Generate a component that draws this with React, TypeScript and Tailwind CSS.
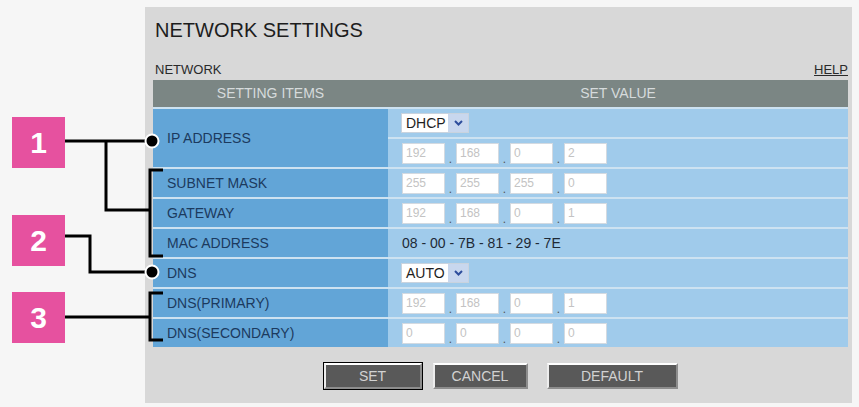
import type { ReactNode } from "react";

const FONT = { fontFamily: '"Liberation Sans", Arial, sans-serif' };

const ROW = "flex h-[30px] border-t-2 border-[#cde2f1]";
const LEFT =
  "w-[235px] shrink-0 bg-[#62a5d7] flex items-center pl-[14px] text-[14px] text-[#1c3a5e]";
const RIGHT = "flex-1 bg-[#a0cbeb] flex items-center pl-[14px]";

function Callout({ n, className }: { n: string; className: string }) {
  return (
    <div
      className={`w-[53px] h-[51px] bg-[#e6519f] flex items-center justify-center text-white text-[30px] font-bold ${className}`}
    >
      {n}
    </div>
  );
}

function Select({ value }: { value: string }) {
  return (
    <div className="flex h-[20px] border border-[#c9d3de] bg-white">
      <div className="w-[46px] pl-[4px] text-[14px] leading-[18px] text-[#1e1e1e]">
        {value}
      </div>
      <div className="w-[20px] bg-[#c8d7ee] flex items-center justify-center">
        <svg width="9" height="6" viewBox="0 0 9 6">
          <path d="M1 1 L4.5 4.5 L8 1" fill="none" stroke="#2e4d9c" strokeWidth="2" />
        </svg>
      </div>
    </div>
  );
}

function IpFields({ parts }: { parts: string[] }) {
  return (
    <div className="flex items-end">
      {parts.map((p, i) => (
        <div key={i} className="flex items-end">
          {i > 0 && (
            <span className="w-[11px] text-center text-[12px] leading-[10px] text-[#555]">.</span>
          )}
          <div className="w-[43px] h-[21px] bg-white border border-[#d3dae1] pl-[3px] text-[12px] leading-[19px] text-[#c3c3c3]">
            {p}
          </div>
        </div>
      ))}
    </div>
  );
}

function Row({ label, children }: { label: string; children: ReactNode }) {
  return (
    <div className={ROW}>
      <div className={LEFT}>{label}</div>
      <div className={RIGHT}>{children}</div>
    </div>
  );
}

function Button({ label, w, focused }: { label: string; w: string; focused?: boolean }) {
  return (
    <div className={`${w} h-[26px] ${focused ? "outline outline-1 outline-black" : ""}`}>
      <div className="h-full bg-[#595959] border-2 border-t-white border-l-[#ededed] border-r-[#8d8d8d] border-b-[#8d8d8d] flex items-center justify-center text-[14px] text-[#d2d2d2]">
        {label}
      </div>
    </div>
  );
}

export default function App() {
  return (
    <div className="relative flex w-[859px] h-[407px] bg-[#f6f6f6] overflow-hidden" style={FONT}>
      {/* callout boxes */}
      <div className="w-[145px] shrink-0 flex flex-col pl-[12px]">
        <Callout n="1" className="mt-[117px]" />
        <Callout n="2" className="mt-[47px]" />
        <Callout n="3" className="mt-[26px]" />
      </div>

      {/* settings panel */}
      <div className="mt-[7px] w-[707px] h-[396px] bg-[#d8d8d8] pl-[8px] pr-[4px] pt-[13px]">
        <div className="text-[20px] leading-[20px] text-[#1d1d1d] pl-[2px]">NETWORK SETTINGS</div>
        <div className="mt-[23px] flex justify-between text-[13px] leading-[13px] text-[#2a2a2a] pl-[2px]">
          <span>NETWORK</span>
          <span className="underline">HELP</span>
        </div>

        <div className="mt-[4px] w-[695px]">
          <div className="flex h-[27px] bg-[#7b8684] text-[14px] text-[#d6dbdc]">
            <div className="w-[235px] flex items-center justify-center">SETTING ITEMS</div>
            <div className="flex-1 flex items-center justify-center">SET VALUE</div>
          </div>

          <div className="flex h-[60px] border-t-2 border-[#cde2f1]">
            <div className={LEFT}>IP ADDRESS</div>
            <div className="flex-1 flex flex-col">
              <div className="h-[28px] bg-[#a0cbeb] flex items-center pl-[13px]">
                <Select value="DHCP" />
              </div>
              <div className="flex-1 border-t-2 border-[#cde2f1] bg-[#a0cbeb] flex items-center pl-[14px]">
                <IpFields parts={["192", "168", "0", "2"]} />
              </div>
            </div>
          </div>
          <Row label="SUBNET MASK">
            <IpFields parts={["255", "255", "255", "0"]} />
          </Row>
          <Row label="GATEWAY">
            <IpFields parts={["192", "168", "0", "1"]} />
          </Row>
          <Row label="MAC ADDRESS">
            <span className="text-[14px] text-[#1e2a36]">08 - 00 - 7B - 81 - 29 - 7E</span>
          </Row>
          <Row label="DNS">
            <div className="-ml-[1px]">
              <Select value="AUTO" />
            </div>
          </Row>
          <Row label="DNS(PRIMARY)">
            <IpFields parts={["192", "168", "0", "1"]} />
          </Row>
          <Row label="DNS(SECONDARY)">
            <IpFields parts={["0", "0", "0", "0"]} />
          </Row>
        </div>

        <div className="mt-[16px] w-[695px] flex justify-center">
          <Button label="SET" w="w-[98px]" focused />
          <div className="ml-[11px]">
            <Button label="CANCEL" w="w-[95px]" />
          </div>
          <div className="ml-[19px]">
            <Button label="DEFAULT" w="w-[131px]" />
          </div>
        </div>
      </div>

      {/* callout leader lines */}
      <svg className="absolute inset-0 pointer-events-none" width="859" height="407">
        <g fill="none" stroke="#000" strokeWidth="3">
          <path d="M65 141 H152" />
          <path d="M106 141 V210 H150" />
          <path d="M163 170 H150 V256 H163" />
          <path d="M65 236 H90 V272 H152" />
          <path d="M163 293 H150 V340 H163" />
          <path d="M65 317 H150" />
        </g>
        <circle cx="152" cy="141" r="6.5" fill="#000" stroke="#fff" strokeWidth="2" />
        <circle cx="152" cy="272" r="6.5" fill="#000" stroke="#fff" strokeWidth="2" />
      </svg>
    </div>
  );
}
